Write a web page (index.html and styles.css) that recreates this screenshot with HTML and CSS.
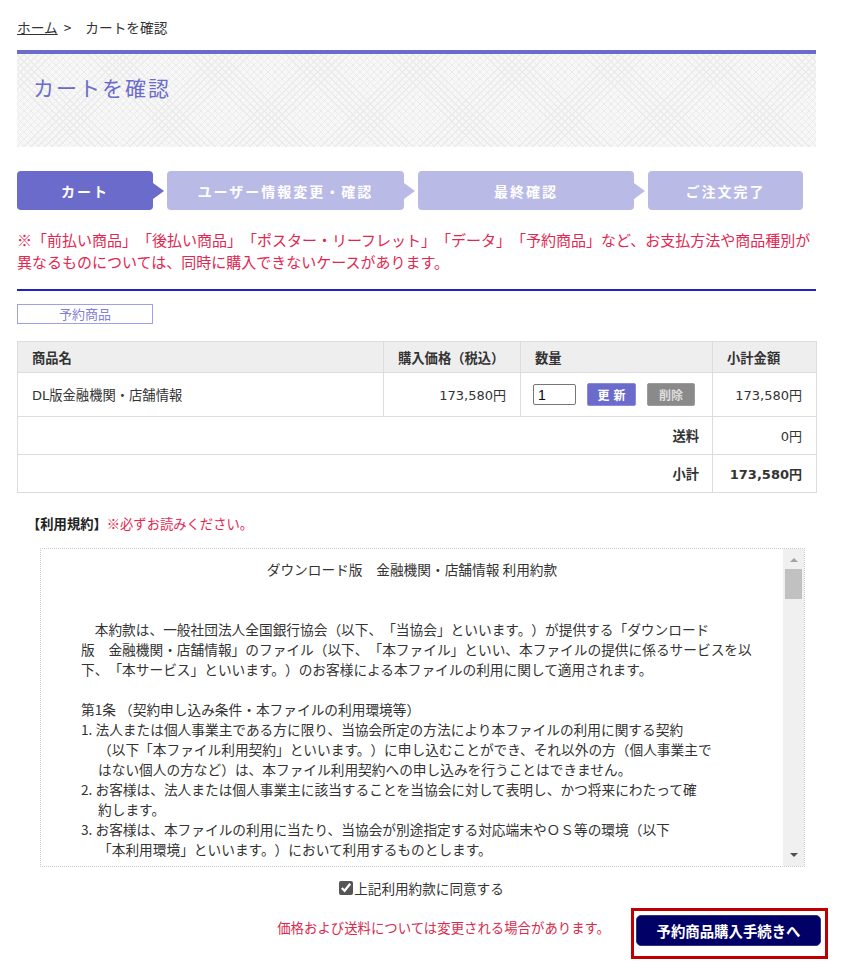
FILE: index.html
```html
<!DOCTYPE html>
<html lang="ja">
<head>
<meta charset="utf-8">
<title>カートを確認</title>
<link rel="stylesheet" href="styles.css">
</head>
<body>
<div class="page">
  <div class="breadcrumb"><a href="#" class="crumb-link">ホーム</a><span class="crumb-sep">&gt;</span><span>カートを確認</span></div>

  <div class="page-head">
    <h1 class="page-title">カートを確認</h1>
  </div>

  <ol class="steps">
    <li class="step step-cart is-active">カート</li>
    <li class="step step-user">ユーザー情報変更・確認</li>
    <li class="step step-final">最終確認</li>
    <li class="step step-done">ご注文完了</li>
  </ol>

  <p class="notice">※「前払い商品」「後払い商品」「ポスター・リーフレット」「データ」「予約商品」など、お支払方法や商品種別が<br>異なるものについては、同時に購入できないケースがあります。</p>

  <hr class="rule">

  <div class="cat-label">予約商品</div>

  <table class="cart">
    <colgroup>
      <col class="c-name"><col class="c-price"><col class="c-qty"><col class="c-sub">
    </colgroup>
    <thead>
      <tr class="head-row"><th>商品名</th><th>購入価格（税込）</th><th>数量</th><th>小計金額</th></tr>
    </thead>
    <tbody>
      <tr class="item-row">
        <td><span class="latin">DL</span>版金融機関・店舗情報</td>
        <td class="num">173,580円</td>
        <td class="qty">
          <div class="qty-box">
            <input class="qty-input" type="text" value="1">
            <button class="btn-update" type="button">更新</button>
            <button class="btn-delete" type="button">削除</button>
          </div>
        </td>
        <td class="num">173,580円</td>
      </tr>
      <tr class="sum-row"><td colspan="3" class="sum-label">送料</td><td class="num">0円</td></tr>
      <tr class="sum-row"><td colspan="3" class="sum-label">小計</td><td class="num strong">173,580円</td></tr>
    </tbody>
  </table>

  <p class="terms-head"><strong>【利用規約】</strong><span class="red">※必ずお読みください。</span></p>

  <div class="terms">
    <div class="terms-body">
      <p class="terms-title">ダウンロード版　金融機関・店舗情報 利用約款</p>
      <p class="terms-para">　本約款は、一般社団法人全国銀行協会（以下、「当協会」といいます。）が提供する「ダウンロード<br>版　金融機関・店舗情報」のファイル（以下、「本ファイル」といい、本ファイルの提供に係るサービスを以<br>下、「本サービス」といいます。）のお客様による本ファイルの利用に関して適用されます。</p>
      <p class="terms-art">第1条 （契約申し込み条件・本ファイルの利用環境等）</p>
      <p class="terms-item">1. 法人または個人事業主である方に限り、当協会所定の方法により本ファイルの利用に関する契約<br>（以下「本ファイル利用契約」といいます。）に申し込むことができ、それ以外の方（個人事業主で<br>はない個人の方など）は、本ファイル利用契約への申し込みを行うことはできません。</p>
      <p class="terms-item">2. お客様は、法人または個人事業主に該当することを当協会に対して表明し、かつ将来にわたって確<br>約します。</p>
      <p class="terms-item">3. お客様は、本ファイルの利用に当たり、当協会が別途指定する対応端末やＯＳ等の環境（以下<br>「本利用環境」といいます。）において利用するものとします。</p>
    </div>
    <div class="scrollbar">
      <span class="sb-up"></span>
      <span class="sb-thumb"></span>
      <span class="sb-track"></span>
      <span class="sb-down"></span>
    </div>
  </div>

  <label class="agree"><input class="agree-check" type="checkbox" checked>上記利用約款に同意する</label>

  <div class="actions">
    <p class="actions-note">価格および送料については変更される場合があります。</p>
    <div class="highlight">
      <button class="btn-proceed" type="button">予約商品購入手続きへ</button>
    </div>
  </div>
</div>
</body>
</html>
```

FILE: styles.css
```css
* { box-sizing: border-box; }

html, body {
  margin: 0;
  padding: 0;
  background: #fff;
}

body {
  font-family: "Noto Sans CJK JP", "Noto Sans", sans-serif;
  color: #333;
  font-size: 13.7px;
  text-spacing-trim: space-all;
}

p { margin: 0; }

.page {
  width: 799px;
  margin-left: 17px;
  padding-top: 17px;
}

/* breadcrumb */
.breadcrumb {
  font-size: 13.7px;
  line-height: 20px;
  height: 20px;
  color: #333;
}
.crumb-link {
  color: #333;
  text-decoration: underline;
}
.crumb-sep {
  margin: 0 14px 0 6px;
}

/* page head */
.page-head {
  margin-top: 13px;
  height: 97px;
  border-top: 4px solid #6b6bcc;
  background-color: #f7f7f7;
  background-image:
    repeating-linear-gradient(45deg, #ebebeb 0 1px, transparent 1px 5px),
    repeating-linear-gradient(-45deg, #ebebeb 0 1px, transparent 1px 5px);
  padding: 18px 0 0 16px;
}
.page-title {
  margin: 0;
  font-size: 21px;
  line-height: 30px;
  font-weight: normal;
  letter-spacing: 2px;
  color: #6b6bcc;
}

/* steps */
.steps {
  list-style: none;
  margin: 24px 0 0 0;
  padding: 0;
  display: flex;
  gap: 14px;
  height: 39px;
}
.step {
  position: relative;
  background: #babae6;
  color: #fff;
  font-weight: bold;
  font-size: 14px;
  letter-spacing: 2px;
  border-radius: 4px;
  display: flex;
  align-items: center;
  justify-content: center;
}
.step::after {
  content: "";
  position: absolute;
  right: -11px;
  top: 50%;
  margin-top: -8px;
  border-left: 11px solid #babae6;
  border-top: 8px solid transparent;
  border-bottom: 8px solid transparent;
}
.step.is-active { background: #6b6bcc; }
.step.is-active::after { border-left-color: #6b6bcc; }
.step-done::after { display: none; }
.step-cart { width: 136px; }
.step-user { width: 237px; }
.step-final { width: 216px; }
.step-done { width: 155px; }

/* notice */
.notice {
  margin-top: 19px;
  font-size: 15px;
  line-height: 22px;
  color: #e3264f;
  white-space: nowrap;
}

.rule {
  margin: 16px 0 0 0;
  border: 0;
  height: 2px;
  background: #2222cc;
}

.cat-label {
  margin-top: 13px;
  width: 136px;
  height: 20px;
  border: 1px solid #a0a0e8;
  color: #8080d8;
  font-size: 13px;
  line-height: 18px;
  text-align: center;
}

/* cart table */
.cart {
  margin-top: 17px;
  width: 799px;
  border-collapse: collapse;
  table-layout: fixed;
  font-size: 13.3px;
}
.c-name { width: 366px; }
.c-price { width: 137px; }
.c-qty { width: 192px; }
.c-sub { width: 104px; }

.cart th, .cart td {
  border: 1px solid #dcdcdc;
  padding: 0 14px;
  text-align: left;
  color: #333;
}
.cart th {
  background: #eeeeee;
  font-weight: bold;
  height: 31px;
}
.item-row td { height: 44px; }
.sum-row td { height: 38px; }
.cart .num {
  text-align: right;
  font-family: "DejaVu Sans", "Noto Sans CJK JP", sans-serif;
  font-size: 13px;
}
.latin { font-family: "DejaVu Sans", sans-serif; font-size: 13px; }
.sum-label { text-align: right !important; font-weight: bold; padding-right: 13px !important; }
.strong { font-weight: bold; }
.cart td.qty { padding-left: 12px; }

.qty-box {
  display: flex;
  align-items: center;
  gap: 11px;
}
.qty-input {
  width: 43px;
  height: 21px;
  border: 1px solid #767676;
  border-radius: 2px;
  padding: 0 4px;
  font-family: "Liberation Sans", sans-serif;
  font-size: 14px;
  color: #000;
}
.btn-update, .btn-delete {
  height: 23px;
  border-radius: 2px;
  font-family: inherit;
  font-size: 12px;
  font-weight: bold;
  padding: 0;
  line-height: 21px;
}
.btn-update {
  width: 49px;
  background: #6b6bcc;
  border: 1px solid #8a8ae0;
  color: #fff;
  letter-spacing: 4px;
  text-indent: 4px;
}
.btn-delete {
  width: 48px;
  background: #8a8a8a;
  border: 1px solid #9c9c9c;
  color: #dedede;
}

/* terms */
.terms-head {
  margin-top: 21px;
  margin-left: 10px;
  font-size: 13.3px;
  line-height: 20px;
  color: #222;
}
.red { color: #e3264f; }

.terms {
  margin: 14px 0 0 23px;
  width: 765px;
  height: 319px;
  border: 1px dotted #c8c8c8;
  display: flex;
  overflow: hidden;
}
.terms-body {
  flex: 1;
  padding: 10px 0 0 40px;
  font-size: 13.7px;
  line-height: 20px;
  color: #333;
  white-space: nowrap;
  overflow: hidden;
}
.terms-title {
  text-align: center;
  padding-right: 40px;
  margin-bottom: 40px;
}
.terms-para { margin-bottom: 20px; }
.terms-item {
  padding-left: 17px;
  text-indent: -17px;
}
.scrollbar {
  width: 21px;
  background: #f0f0f0;
  display: flex;
  flex-direction: column;
  align-items: center;
}
.sb-up, .sb-down {
  width: 0;
  height: 0;
  border-left: 4px solid transparent;
  border-right: 4px solid transparent;
}
.sb-up {
  margin-top: 9px;
  border-bottom: 4px solid #a3a3a3;
}
.sb-thumb {
  margin-top: 7px;
  width: 17px;
  height: 30px;
  background: #c1c1c1;
}
.sb-track { flex: 1; }
.sb-down {
  margin-bottom: 9px;
  border-top: 4px solid #505050;
}

/* agree */
.agree {
  display: flex;
  justify-content: center;
  align-items: center;
  margin: 11px 0 0 10px;
  height: 20px;
  font-size: 13.6px;
  color: #333;
}
.agree-check {
  margin: 0 1px 0 0;
  width: 14px;
  height: 14px;
  accent-color: #555;
}

/* actions */
.actions {
  margin: 10px -12px 0 0;
  display: flex;
  justify-content: flex-end;
  align-items: flex-start;
  gap: 21px;
}
.actions-note {
  margin-top: 9px;
  font-size: 13.4px;
  line-height: 20px;
  color: #d62b4d;
}
.highlight {
  border: 3px solid #c00000;
  padding: 4px 4px 10px 2px;
}
.btn-proceed {
  width: 185px;
  height: 31px;
  background: #000066;
  color: #fff;
  border: 1px solid #33337a;
  border-radius: 5px;
  font-family: inherit;
  font-size: 14.4px;
  font-weight: bold;
  padding: 0;
}
```
